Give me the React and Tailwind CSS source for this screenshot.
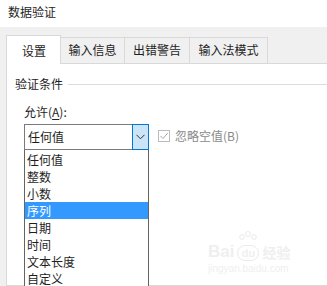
import React from 'react';

const items = ['任何值', '整数', '小数', '序列', '日期', '时间', '文本长度', '自定义'];

const tabs = [
    { label: '输入信息', w: 'w-[64px]' },
    { label: '出错警告', w: 'w-[65px]' },
    { label: '输入法模式', w: 'w-[78px]' },
];

export default function App() {
    return (
        <div className="w-[327px] h-[286px] overflow-hidden bg-white relative flex flex-col text-[12px] text-[#1e1e1e] font-['Microsoft_YaHei','Noto_Sans_CJK_SC',sans-serif]">
            {/* Title */}
            <div className="h-[27px] shrink-0 pl-[8px] flex items-center pb-[4px] leading-[16px]">数据验证</div>

            <div className="flex-1 bg-[#f0f0f0] pl-[6px] pt-[8px] flex flex-col">
                {/* Tabs */}
                <div className="h-[28px] flex items-end shrink-0">
                    <div className="w-[55px] h-[29px] bg-white border border-b-0 border-[#d9d9d9] relative z-10 -mb-px flex items-center justify-center pl-[1px] pt-[2px] leading-[16px]">设置</div>
                    {tabs.map(t => (
                        <div key={t.label} className={`${t.w} h-[26px] bg-[#f0f0f0] border-t border-r border-[#d9d9d9] flex items-center justify-center leading-[16px] pb-[1px]`}>{t.label}</div>
                    ))}
                </div>

                {/* Panel */}
                <div className="flex-1 bg-white border border-r-0 border-[#d9d9d9]">
                    <div className="pl-[8px] pt-[12px] flex items-center gap-[5px] leading-[16px]">
                        <span>验证条件</span>
                        <div className="flex-1 h-px bg-[#dcdcdc]" />
                    </div>

                    <div className="pl-[17px] mt-[12px] leading-[16px]">
                        允许(<span className="underline underline-offset-2">A</span>):
                    </div>

                    <div className="pl-[17px] mt-[4px] flex items-start">
                        {/* Combo */}
                        <div className="relative w-[125px] h-[26px] flex">
                            <div className="flex-1 border border-r-0 border-[#7a7a7a] flex items-center pl-[3px] leading-[16px]">任何值</div>
                            <div className="w-[17px] bg-[#cce4f7] border border-[#0078d7] flex items-center justify-center">
                                <svg width="9" height="6" viewBox="0 0 9 6">
                                    <path d="M0.5 0.8 L4.5 4.8 L8.5 0.8" fill="none" stroke="#333" strokeWidth="1" />
                                </svg>
                            </div>

                            {/* Dropdown list */}
                            <div className="absolute left-0 top-[26px] w-[125px] h-[140px] bg-white border border-t-0 border-[#646464] z-20 pt-px">
                                {items.map(it => (
                                    <div key={it} className={`h-[17px] pl-[2px] flex items-center leading-[16px] ${it === '序列' ? 'bg-[#3399ff] text-white' : ''}`}>{it}</div>
                                ))}
                            </div>
                        </div>

                        {/* Checkbox */}
                        <div className="ml-[9px] mt-[4px] flex items-center gap-[5px] text-[#8a8a8a]">
                            <div className="w-[12px] h-[12px] border border-[#bcbcbc] flex items-center justify-center">
                                <svg width="10" height="10" viewBox="0 0 10 10">
                                    <path d="M1.5 5 L4 7.5 L8.8 2" fill="none" stroke="#a8a8a8" strokeWidth="1" />
                                </svg>
                            </div>
                            <span className="leading-[16px]">忽略空值(B)</span>
                        </div>
                    </div>
                </div>
            </div>

            {/* Watermark */}
            <div className="absolute left-[208px] top-[231px] text-[#efefef] pointer-events-none select-none">
                <div className="flex items-end gap-[3px]">
                    <span className="text-[17px] font-bold leading-[18px] font-['Liberation_Sans',sans-serif]">Bai</span>
                    <div className="relative w-[22px] h-[30px]">
                        <svg width="22" height="16" viewBox="0 0 22 16" className="absolute top-0 left-0">
                            <ellipse cx="11" cy="3" rx="2.5" ry="2.5" fill="none" stroke="#ebebeb" />
                            <ellipse cx="5" cy="6" rx="2.2" ry="2.5" fill="none" stroke="#ebebeb" />
                            <ellipse cx="17" cy="6" rx="2.2" ry="2.5" fill="none" stroke="#ebebeb" />
                        </svg>
                        <span className="absolute bottom-0 left-0 w-[22px] h-[16px] rounded-full border border-[#ebebeb] text-[11px] font-bold leading-[14px] text-center font-['Liberation_Sans',sans-serif]">du</span>
                    </div>
                    <span className="text-[14px] font-bold leading-[18px]">经验</span>
                </div>
                <div className="text-[10px] leading-[12px] mt-[2px] font-['Liberation_Sans',sans-serif]">jingyan.baidu.com</div>
            </div>
        </div>
    );
}
